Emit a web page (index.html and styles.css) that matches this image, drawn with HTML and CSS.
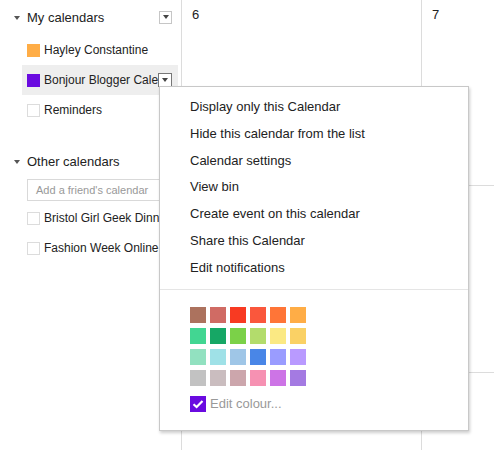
FILE: index.html
```html
<!DOCTYPE html>
<html>
<head>
<meta charset="utf-8">
<link rel="stylesheet" href="styles.css">
</head>
<body>
<div class="page">
  <aside class="sidebar">
    <div class="section-head">
      <span class="tri"></span>
      <span class="head-label">My calendars</span>
      <span class="dd"><span class="dd-tri"></span></span>
    </div>
    <div class="cal-row">
      <span class="sw" style="background:#ffad46"></span>
      <span class="cal-name">Hayley Constantine</span>
    </div>
    <div class="cal-row active">
      <span class="sw" style="background:#6a0be0"></span>
      <span class="cal-name">Bonjour Blogger Calendar</span>
      <span class="dd dark"><span class="dd-tri"></span></span>
    </div>
    <div class="cal-row">
      <span class="sw empty"></span>
      <span class="cal-name">Reminders</span>
    </div>

    <div class="section-head other">
      <span class="tri"></span>
      <span class="head-label">Other calendars</span>
    </div>
    <div class="friend-input">Add a friend's calendar</div>
    <div class="cal-row">
      <span class="sw empty"></span>
      <span class="cal-name">Bristol Girl Geek Dinners</span>
    </div>
    <div class="cal-row">
      <span class="sw empty"></span>
      <span class="cal-name">Fashion Week Online</span>
    </div>
  </aside>

  <main class="grid">
    <div class="cell"><span class="date">6</span></div>
    <div class="cell"><span class="date">7</span></div>
    <div class="cell"></div>
    <div class="cell"></div>
    <div class="cell"></div>
    <div class="cell"></div>
  </main>

  <div class="menu">
    <ul class="menu-list">
      <li>Display only this Calendar</li>
      <li>Hide this calendar from the list</li>
      <li>Calendar settings</li>
      <li>View bin</li>
      <li>Create event on this calendar</li>
      <li>Share this Calendar</li>
      <li>Edit notifications</li>
    </ul>
    <div class="sep"></div>
    <div class="palette">
      <span style="background:#ac725e"></span>
      <span style="background:#d06b64"></span>
      <span style="background:#f83a22"></span>
      <span style="background:#fa573c"></span>
      <span style="background:#ff7537"></span>
      <span style="background:#ffad46"></span>
      <span style="background:#42d692"></span>
      <span style="background:#16a765"></span>
      <span style="background:#7bd148"></span>
      <span style="background:#b3dc6c"></span>
      <span style="background:#fbe983"></span>
      <span style="background:#fad165"></span>
      <span style="background:#92e1c0"></span>
      <span style="background:#9fe1e7"></span>
      <span style="background:#9fc6e7"></span>
      <span style="background:#4986e7"></span>
      <span style="background:#9a9cff"></span>
      <span style="background:#b99aff"></span>
      <span style="background:#c2c2c2"></span>
      <span style="background:#cabdbf"></span>
      <span style="background:#cca6ac"></span>
      <span style="background:#f691b2"></span>
      <span style="background:#cd74e6"></span>
      <span style="background:#a47ae2"></span>
    </div>
    <div class="edit-colour">
      <span class="check">
        <svg width="16" height="16" viewBox="0 0 16 16"><path d="M3.5 8.2 L6.6 11 L12.5 5" fill="none" stroke="#fff" stroke-width="2.2"/></svg>
      </span>
      <span class="edit-label">Edit colour...</span>
    </div>
  </div>
</div>
</body>
</html>
```
FILE: styles.css
```css
* { box-sizing: border-box; }
html, body { margin: 0; padding: 0; background: #fff; }
body {
  font-family: "Liberation Sans", Arial, sans-serif;
  color: #222;
  width: 494px;
  height: 450px;
  overflow: hidden;
}
.page {
  position: relative;
  display: flex;
  width: 494px;
  height: 450px;
}
.sidebar {
  width: 182px;
  flex: none;
  border-right: 1px solid #dcdcdc;
  height: 450px;
}
.section-head {
  height: 35px;
  display: flex;
  align-items: center;
  padding-left: 14px;
  padding-right: 9px;
  padding-bottom: 1px;
}
.section-head.other { margin-top: 19px; height: 35px; }
.tri {
  width: 0; height: 0;
  border-left: 3.5px solid transparent;
  border-right: 3.5px solid transparent;
  border-top: 4px solid #555;
  margin-right: 7px;
  margin-top: 1px;
}
.head-label {
  font-size: 13px;
  color: #222;
  flex: 1;
}
.dd {
  width: 13px; height: 13px;
  border: 1px solid #c6c6c6;
  background: #fff;
  display: flex;
  align-items: center;
  justify-content: center;
  flex: none;
}
.dd.dark { border-color: #777; width: 14px; height: 14px; }
.dd-tri {
  width: 0; height: 0;
  border-left: 3.5px solid transparent;
  border-right: 3.5px solid transparent;
  border-top: 4px solid #444;
}
.cal-row {
  height: 30px;
  display: flex;
  align-items: center;
  margin-left: 22px;
  margin-right: 3px;
  padding-left: 5px;
  padding-right: 6px;
}
.cal-row.active { background: #eeeeee; }
.sw {
  width: 13px; height: 13px;
  flex: none;
  margin-right: 4px;
}
.sw.empty { border: 1px solid #dcdcdc; background: #fff; }
.cal-name {
  font-size: 12px;
  color: #222;
  white-space: nowrap;
  overflow: hidden;
  flex: 1;
  min-width: 0;
}
.friend-input {
  margin-left: 27px;
  margin-right: 9px;
  height: 22px;
  border: 1px solid #d9d9d9;
  font-size: 11px;
  color: #999;
  padding-left: 8px;
  line-height: 20px;
  margin-bottom: 2px;
}
.grid {
  flex: 1;
  display: grid;
  grid-template-columns: 240px 240px;
  grid-template-rows: 186px 187px 187px;
  overflow: hidden;
}
.cell {
  border-right: 1px solid #dcdcdc;
  border-bottom: 1px solid #dcdcdc;
  padding: 5px 0 0 10px;
}
.date { font-size: 13px; color: #222; }
.menu {
  position: absolute;
  left: 159px;
  top: 86px;
  width: 310px;
  height: 345px;
  background: #fff;
  border: 1px solid #c8c8c8;
  box-shadow: 1px 2px 3px rgba(0,0,0,0.2);
  padding-top: 7px;
}
.menu-list {
  list-style: none;
  margin: 0;
  padding: 0;
}
.menu-list li {
  font-size: 13px;
  line-height: 26.8px;
  padding-left: 30px;
  color: #222;
}
.sep {
  height: 1px;
  background: #e5e5e5;
  margin-top: 7px;
}
.palette {
  display: grid;
  grid-template-columns: repeat(6, 16px);
  grid-auto-rows: 16px;
  column-gap: 4px;
  row-gap: 5px;
  margin: 17px 0 0 30px;
}
.palette span { display: block; width: 16px; height: 16px; }
.edit-colour {
  display: flex;
  align-items: center;
  margin: 10px 0 0 30px;
  gap: 4px;
}
.check {
  width: 16px; height: 16px;
  background: #6a0be0;
  display: block;
}
.check svg { display: block; }
.edit-label { font-size: 13px; color: #999; }
```
